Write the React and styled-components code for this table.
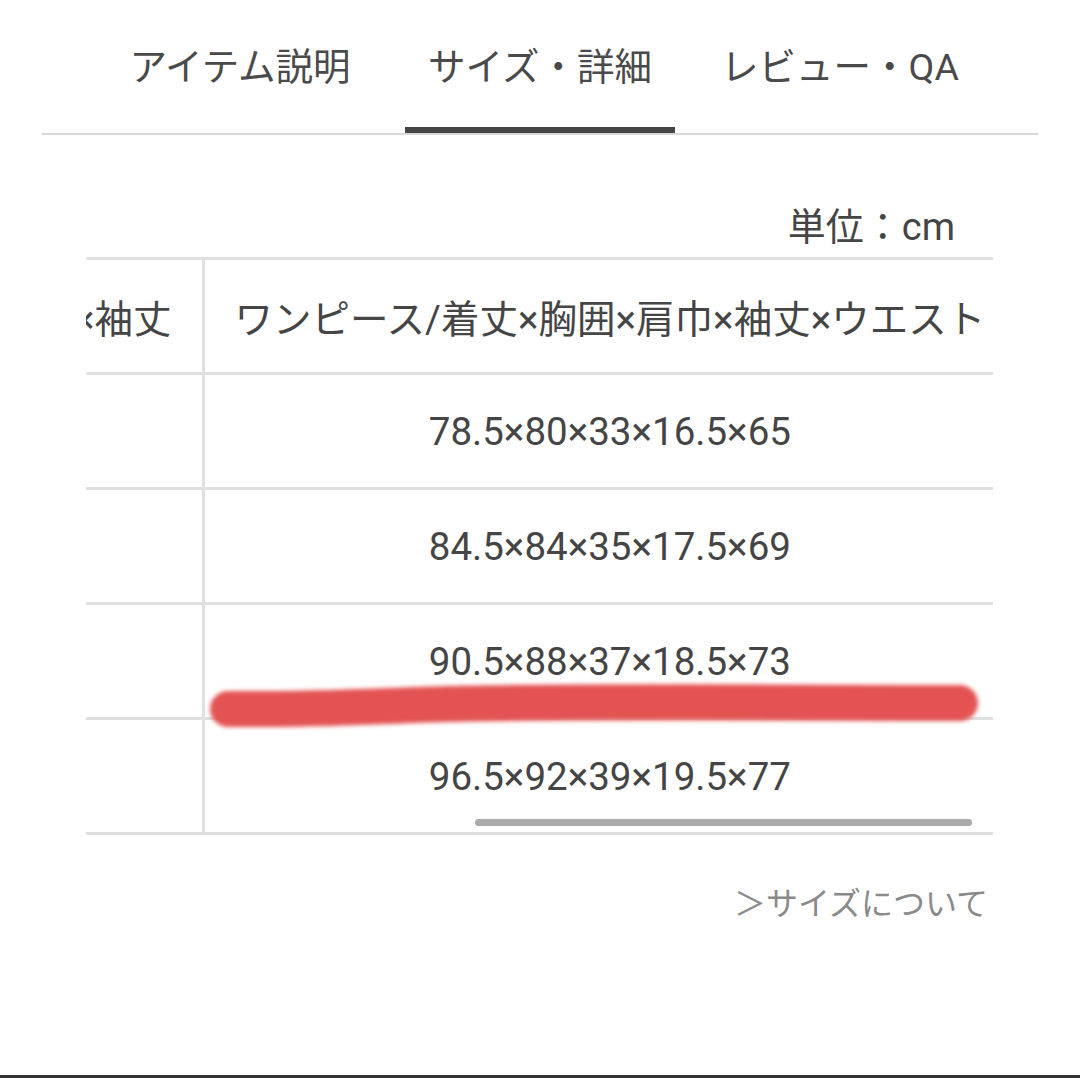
import React, { useEffect, useRef } from 'react';
import styled, { createGlobalStyle } from 'styled-components';

const GlobalStyle = createGlobalStyle`
  html, body {
    margin: 0;
    padding: 0;
    background: #ffffff;
  }
  body {
    font-family: Roboto, "Noto Sans CJK JP", sans-serif;
    color: #454545;
  }
`;

const Page = styled.div`
  width: 1080px;
  height: 1078px;
  display: flex;
  flex-direction: column;
  box-sizing: border-box;
  overflow: hidden;
`;

const TabBar = styled.div`
  margin: 0 42px;
  height: 133px;
  border-bottom: 2px solid #d8d8d8;
  display: flex;
  justify-content: center;
`;

const Tab = styled.div`
  position: relative;
  width: 300px;
  display: flex;
  align-items: center;
  justify-content: center;
  padding-bottom: 6px;
  box-sizing: border-box;
  font-size: 37.5px;
  color: #4a4a4a;
  white-space: nowrap;
  &::after {
    content: '';
    display: ${p => (p.$active ? 'block' : 'none')};
    position: absolute;
    left: 15px;
    right: 15px;
    bottom: 0;
    height: 6px;
    background: #444444;
  }
`;

const Unit = styled.div`
  margin-top: 72px;
  height: 40px;
  line-height: 40px;
  text-align: right;
  padding-right: 125px;
  font-size: 38px;
  color: #454545;
`;

const TableArea = styled.div`
  position: relative;
  margin-top: 10px;
  margin-left: 86px;
  width: 907px;
`;

const Scroller = styled.div`
  overflow-x: auto;
  scrollbar-width: none;
  &::-webkit-scrollbar {
    display: none;
  }
`;

const Table = styled.table`
  border-collapse: collapse;
  border-top: 3px solid #e0e0e0;
`;

const Row = styled.tr`
  height: 115px;
  border-bottom: 3px solid #e0e0e0;
`;

const Cell = styled.td`
  padding: 0 30px;
  white-space: nowrap;
  text-align: center;
  vertical-align: middle;
  font-size: 38.5px;
  color: #454545;
  & + & {
    border-left: 3px solid #e0e0e0;
  }
`;

const Thumb = styled.div`
  position: absolute;
  left: 389px;
  top: 562px;
  width: 497px;
  height: 7px;
  border-radius: 4px;
  background: #aaaaaa;
`;

const Scribble = styled.svg`
  position: absolute;
  left: 110px;
  top: 418px;
  pointer-events: none;
`;

const SizeLink = styled.div`
  margin-top: 49px;
  height: 40px;
  line-height: 40px;
  text-align: right;
  padding-right: 92px;
  font-size: 32px;
  color: #8a8a8a;
`;

const BottomEdge = styled.div`
  margin-top: auto;
  height: 3px;
  background: #333333;
`;

const rows = [
  ['60×84×38×17', '78.5×80×33×16.5×65'],
  ['62×88×40×18', '84.5×84×35×17.5×69'],
  ['64×92×42×19', '90.5×88×37×18.5×73'],
  ['66×96×44×20', '96.5×92×39×19.5×77'],
];

export default function App() {
  const scrollRef = useRef(null);
  const firstRef = useRef(null);

  useEffect(() => {
    if (scrollRef.current && firstRef.current) {
      scrollRef.current.scrollLeft = firstRef.current.offsetWidth - 117;
    }
  }, []);

  return (
    <Page>
      <GlobalStyle />
      <TabBar>
        <Tab>アイテム説明</Tab>
        <Tab $active>サイズ・詳細</Tab>
        <Tab>レビュー・QA</Tab>
      </TabBar>

      <Unit>単位：cm</Unit>

      <TableArea>
        <Scroller ref={scrollRef}>
          <Table>
            <tbody>
              <Row>
                <Cell ref={firstRef}>トップス/着丈×胸囲×肩巾×袖丈</Cell>
                <Cell>ワンピース/着丈×胸囲×肩巾×袖丈×ウエスト</Cell>
              </Row>
              {rows.map((r, i) => (
                <Row key={i}>
                  <Cell>{r[0]}</Cell>
                  <Cell>{r[1]}</Cell>
                </Row>
              ))}
            </tbody>
          </Table>
        </Scroller>
        <Thumb />
        <Scribble width="800" height="70" viewBox="0 0 800 70">
          <defs>
            <filter id="soft" filterUnits="userSpaceOnUse" x="0" y="0" width="800" height="70">
              <feGaussianBlur stdDeviation="2" />
            </filter>
          </defs>
          <path
            d="M 32 34 C 120 35, 180 31, 250 29 S 520 27, 764 28"
            stroke="#e35252"
            strokeWidth="36"
            strokeLinecap="round"
            fill="none"
            filter="url(#soft)"
          />
        </Scribble>
      </TableArea>

      <SizeLink>＞サイズについて</SizeLink>
      <BottomEdge />
    </Page>
  );
}
